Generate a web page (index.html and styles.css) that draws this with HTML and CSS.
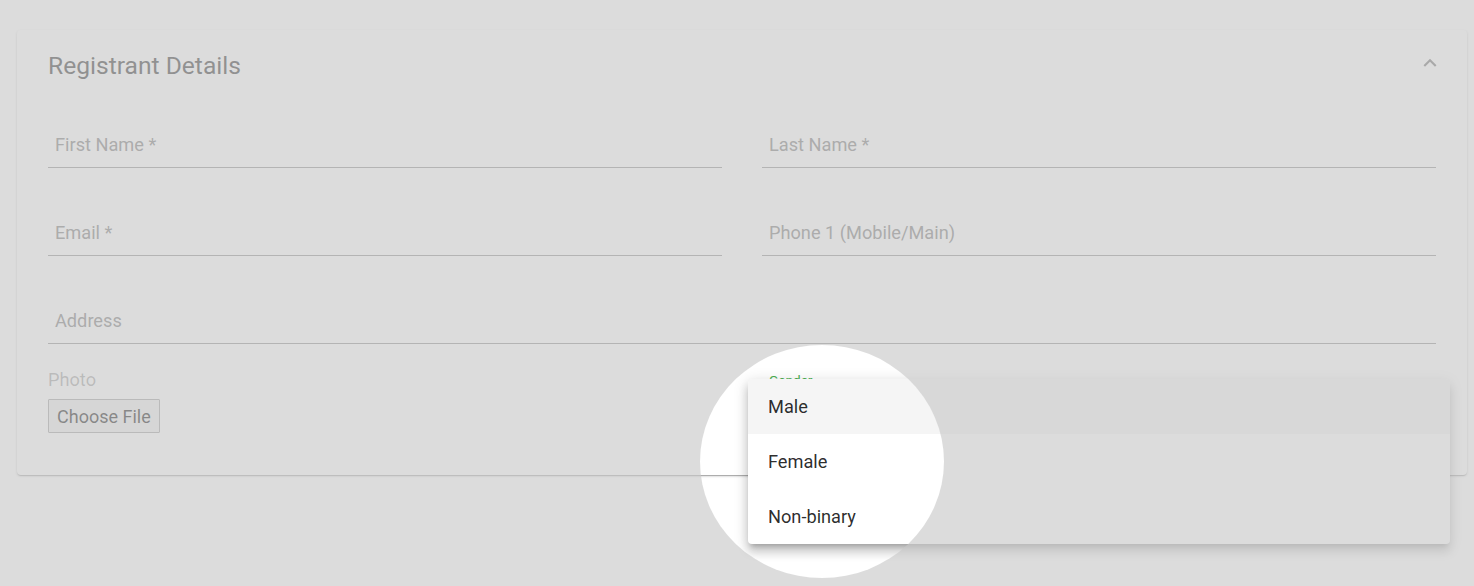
FILE: index.html
```html
<!DOCTYPE html>
<html lang="en">
<head>
<meta charset="utf-8">
<title>Registrant Details</title>
<link rel="stylesheet" href="styles.css">
</head>
<body>
<div class="page">
  <section class="card">
    <header class="card-header">
      <h2 class="card-title">Registrant Details</h2>
      <svg class="expand-icon" viewBox="0 0 24 24" aria-hidden="true"><path d="M12 8l-6 6 1.41 1.41L12 10.83l4.59 4.58L18 14z"/></svg>
    </header>
    <div class="form-grid">
      <div class="field"><span class="field-label">First Name *</span></div>
      <div class="field"><span class="field-label">Last Name *</span></div>
      <div class="field"><span class="field-label">Email *</span></div>
      <div class="field"><span class="field-label">Phone 1 (Mobile/Main)</span></div>
      <div class="field field-wide"><span class="field-label">Address</span></div>
      <div class="upload">
        <span class="upload-label">Photo</span>
        <button class="file-btn" type="button">Choose File</button>
      </div>
      <div class="select-field">
        <span class="select-label">Gender</span>
        <div class="select-box"></div>
      </div>
    </div>
  </section>
</div>
<ul class="menu">
  <li class="menu-item menu-item-active">Male</li>
  <li class="menu-item">Female</li>
  <li class="menu-item">Non-binary</li>
</ul>
<div class="spotlight"></div>
</body>
</html>
```
FILE: styles.css
```css
html, body {
  margin: 0;
  padding: 0;
  height: 100%;
  overflow: hidden;
}
body {
  background: #ffffff;
  font-family: Roboto, "Liberation Sans", Arial, sans-serif;
  color: rgba(0, 0, 0, 0.87);
  position: relative;
}
.page {
  padding: 30px 7px 0 17px;
}
.card {
  width: 1450px;
  box-sizing: border-box;
  background: #ffffff;
  border-radius: 4px;
  padding: 0 31px 42px;
  box-shadow: 0 1px 3px 0 rgba(0,0,0,0.2), 0 1px 1px 0 rgba(0,0,0,0.14), 0 2px 1px -1px rgba(0,0,0,0.12);
}
.card-header {
  height: 50px;
  display: flex;
  justify-content: space-between;
  align-items: flex-start;
}
.card-title {
  margin: 0;
  padding-top: 22px;
  font-size: 24.6px;
  line-height: 28px;
  font-weight: 400;
  color: #353535;
}
.expand-icon {
  width: 26px;
  height: 26px;
  margin-top: 20px;
  margin-right: -7px;
  fill: rgba(0, 0, 0, 0.54);
}
.form-grid {
  display: grid;
  grid-template-columns: 1fr 1fr;
  column-gap: 40px;
}
.field {
  height: 88px;
  box-sizing: border-box;
  display: flex;
  flex-direction: column;
  justify-content: flex-end;
  border-bottom: 1px solid rgba(0, 0, 0, 0.42);
  padding: 0 0 12px 7px;
}
.field-wide {
  grid-column: 1 / span 2;
}
.field-label {
  font-size: 18.2px;
  line-height: 20px;
  color: #7c7c7c;
}
.upload {
  padding-top: 26px;
  display: flex;
  flex-direction: column;
  align-items: flex-start;
}
.upload-label {
  font-size: 18.2px;
  line-height: 20px;
  color: rgba(0, 0, 0, 0.36);
}
.file-btn {
  margin-top: 9px;
  height: 34px;
  padding: 0 8px;
  font-family: Roboto, "Liberation Sans", Arial, sans-serif;
  font-size: 18px;
  color: #1a1a1a;
  background: #efefef;
  border: 1px solid #a3a3a3;
  border-radius: 1px;
}
.select-field {
  padding-top: 29px;
  display: flex;
  flex-direction: column;
}
.select-label {
  font-size: 13.6px;
  line-height: 15px;
  color: #4caf50;
  padding-left: 7px;
}
.select-box {
  height: 40px;
  border-bottom: 2px solid #4caf50;
}
.menu {
  position: absolute;
  left: 748px;
  top: 379px;
  width: 702px;
  margin: 0;
  padding: 0;
  list-style: none;
  background: #ffffff;
  border-radius: 4px;
  overflow: hidden;
  z-index: 10;
  box-shadow: 0 5px 5px -3px rgba(0,0,0,0.2), 0 8px 10px 1px rgba(0,0,0,0.14), 0 3px 14px 2px rgba(0,0,0,0.12);
}
.menu-item {
  height: 55px;
  display: flex;
  align-items: center;
  padding-left: 20px;
  font-size: 18.2px;
  color: rgba(0, 0, 0, 0.84);
}
.menu-item-active {
  background: rgba(0, 0, 0, 0.04);
}
.spotlight {
  position: absolute;
  left: 700px;
  top: 345px;
  width: 244px;
  height: 233px;
  border-radius: 50%;
  box-shadow: 0 0 0 3000px rgba(199, 199, 199, 0.63);
  z-index: 20;
  pointer-events: none;
}
```
